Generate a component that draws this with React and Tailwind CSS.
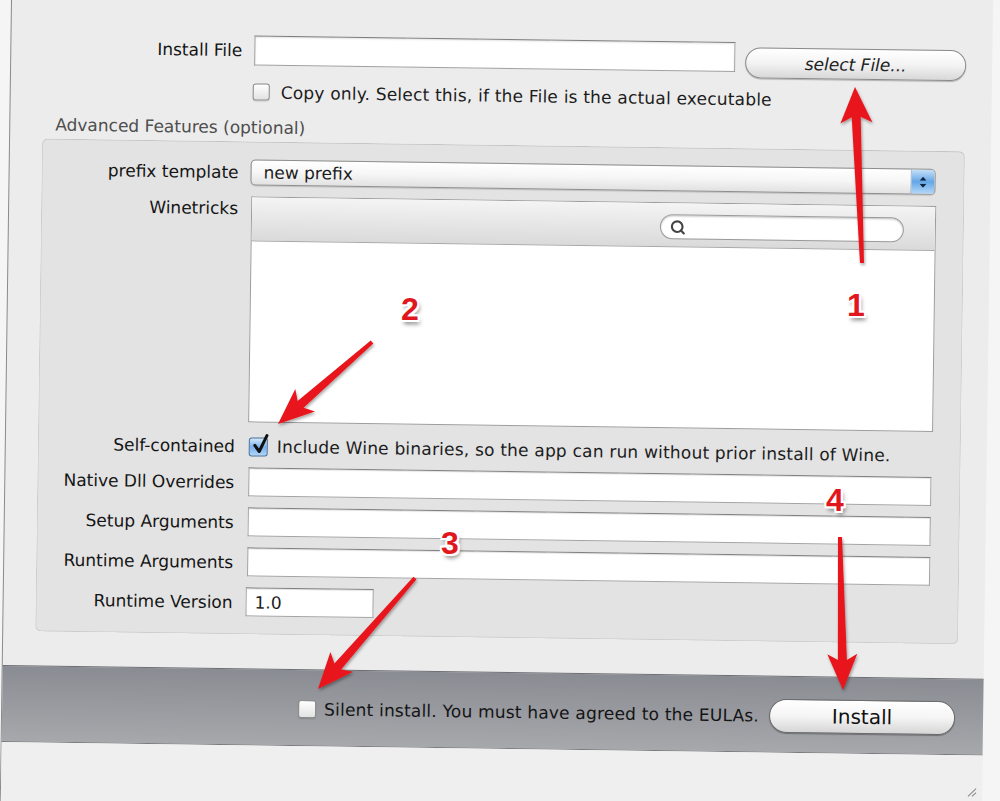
import React from "react";
import { Search } from "lucide-react";

// annotation arrows drawn over the screenshot (page coordinates)
function arrowPoints(tx, ty, px, py, headLen, headW, w0, w1) {
  const dx = px - tx;
  const dy = py - ty;
  const len = Math.hypot(dx, dy);
  const ux = dx / len;
  const uy = dy / len;
  const nx = -uy;
  const ny = ux;
  const bx = px - ux * headLen;
  const by = py - uy * headLen;
  const jx = bx + ux * 6;
  const jy = by + uy * 6;
  const pts = [
    [tx + (nx * w0) / 2, ty + (ny * w0) / 2],
    [jx + (nx * w1) / 2, jy + (ny * w1) / 2],
    [bx + (nx * headW) / 2, by + (ny * headW) / 2],
    [px, py],
    [bx - (nx * headW) / 2, by - (ny * headW) / 2],
    [jx - (nx * w1) / 2, jy - (ny * w1) / 2],
    [tx - (nx * w0) / 2, ty - (ny * w0) / 2],
  ];
  return pts.map((p) => p.map((v) => v.toFixed(1)).join(",")).join(" ");
}

const ARROWS = [
  [862, 263, 855, 87, 36, 32, 4, 9],
  [372, 342, 278, 424, 36, 30, 4, 9],
  [415, 578, 318, 689, 36, 30, 4, 9],
  [840, 537, 843, 690, 36, 30, 4, 9],
];

const outline =
  "[text-shadow:-2px_-2px_0_#fff,2px_-2px_0_#fff,-2px_2px_0_#fff,2px_2px_0_#fff,0_-2px_0_#fff,0_2px_0_#fff,-2px_0_0_#fff,2px_0_0_#fff,2px_4px_4px_rgba(0,0,0,0.5)]";

function Box({ className = "" }) {
  return (
    <div
      className={
        "h-[17px] w-[17px] shrink-0 rounded-[3px] border border-[#8c8c8c] bg-linear-to-b from-white to-[#e2e2e2] shadow-[0_1px_1px_rgba(0,0,0,0.15)] " +
        className
      }
    />
  );
}

function Field({ className = "", children }) {
  return (
    <div
      className={
        "flex h-[29px] items-center border border-[#a4a4a4] border-t-[#7f7f7f] bg-white pl-[8px] text-[17px] shadow-[inset_0_1px_1px_rgba(0,0,0,0.12)] " +
        className
      }
    >
      {children}
    </div>
  );
}

function Label({ children, className = "" }) {
  return (
    <div className={"w-[196px] shrink-0 whitespace-nowrap text-right text-[17px] text-[#151515] " + className}>
      {children}
    </div>
  );
}

export default function App() {
  return (
    <div className="relative h-[801px] w-[1000px] overflow-hidden bg-[#f5f5f5] font-['DejaVu_Sans',sans-serif] text-[17px] leading-[20px] text-[#1c1c1c]">
      <div className="pl-[12px]">
        <div className="-mt-[30px] flex h-[880px] w-[981px] origin-[0px_30px] rotate-[0.8deg] flex-col bg-[#ececec] pt-[30px] shadow-[-1px_0_0_#8a8a8a]">
          {/* install file */}
          <div className="flex items-start pt-[32px]">
            <div className="flex h-[30px] w-[231px] items-center justify-end text-[17px] text-[#151515]">
              Install File
            </div>
            <div className="ml-[12px] h-[30px] w-[481px] border border-[#a0a0a0] border-t-[#7c7c7c] bg-white shadow-[inset_0_1px_2px_rgba(0,0,0,0.12)]" />
            <button
              type="button"
              className="ml-[10px] mt-[5px] h-[31px] w-[221px] rounded-full border border-[#8a8a8a] bg-linear-to-b from-white via-[#f3f3f3] to-[#d8d8d8] text-[17px] italic text-[#222] shadow-[0_1px_1px_rgba(0,0,0,0.25)]"
            >
              select File...
            </button>
          </div>
          <div className="mt-[12px] flex h-[17px] items-center pl-[242px]">
            <Box />
            <span className="ml-[11px] whitespace-nowrap tracking-[0.2px]">
              Copy only. Select this, if the File is the actual executable
            </span>
          </div>

          <div className="ml-[45px] mt-[18px] h-[18px] whitespace-nowrap text-[17px] leading-[18px] text-[#4e4e4e]">
            Advanced Features (optional)
          </div>

          {/* advanced group */}
          <div className="ml-[32px] mt-[5px] h-[493px] w-[923px] rounded-[6px] border border-[#cdcdcd] border-t-[#c4c4c4] bg-[#e3e3e3] pt-[17px]">
            <div className="flex items-center">
              <Label>prefix template</Label>
              <div className="ml-[12px] flex h-[26px] w-[685px] items-center rounded-[5px] border border-[#8e8e8e] bg-linear-to-b from-white via-[#f6f6f6] to-[#e2e2e2] shadow-[0_1px_1px_rgba(0,0,0,0.15)]">
                <span className="flex-1 pl-[12px] text-[17px]">new prefix</span>
                <div className="flex h-full w-[24px] flex-col items-center justify-center gap-[3px] rounded-r-[4px] border-l border-[#6a8db3] bg-linear-to-b from-[#c6e0f8] via-[#64a6e6] to-[#b4d8f8]">
                  <svg width="7" height="4" viewBox="0 0 7 4">
                    <path d="M3.5 0 L7 4 L0 4 Z" fill="#10243e" />
                  </svg>
                  <svg width="7" height="4" viewBox="0 0 7 4">
                    <path d="M0 0 L7 0 L3.5 4 Z" fill="#10243e" />
                  </svg>
                </div>
              </div>
            </div>

            <div className="mt-[11px] flex items-start">
              <Label className="pt-[2px]">Winetricks</Label>
              <div className="ml-[13px] flex h-[226px] w-[685px] flex-col border border-[#9c9c9c] bg-white">
                <div className="flex h-[44px] items-start border-b border-[#a8a8a8] bg-linear-to-b from-[#f4f4f4] to-[#dadada] pl-[408px] pt-[11px]">
                  <div className="flex h-[25px] w-[244px] items-center rounded-full border border-[#9a9a9a] bg-white pl-[9px] shadow-[inset_0_1px_2px_rgba(0,0,0,0.25)]">
                    <Search size={16} strokeWidth={3.2} color="#444" />
                  </div>
                </div>
              </div>
            </div>

            <div className="mt-[14px] flex h-[20px] items-center">
              <Label>Self-contained</Label>
              <div className="relative ml-[14px] h-[19px] w-[19px] shrink-0 rounded-[3px] border border-[#44719f] bg-linear-to-b from-[#d6e9fb] via-[#78b0ea] to-[#b0d5f8]">
                <svg
                  className="absolute -top-[6px] left-[1px]"
                  width="20"
                  height="24"
                  viewBox="0 0 20 24"
                >
                  <path
                    d="M4 13 L8.5 19 L16 3"
                    stroke="#111"
                    strokeWidth="3"
                    fill="none"
                    strokeLinecap="round"
                    strokeLinejoin="round"
                  />
                </svg>
              </div>
              <span className="ml-[9px] whitespace-nowrap tracking-[0.2px]">
                Include Wine binaries, so the app can run without prior install of Wine.
              </span>
            </div>

            <div className="mt-[11px] flex items-center">
              <Label>Native Dll Overrides</Label>
              <Field className="ml-[14px] w-[683px]" />
            </div>
            <div className="mt-[11px] flex items-center">
              <Label>Setup Arguments</Label>
              <Field className="ml-[14px] w-[683px]" />
            </div>
            <div className="mt-[11px] flex items-center">
              <Label>Runtime Arguments</Label>
              <Field className="ml-[14px] w-[683px]" />
            </div>
            <div className="mt-[11px] flex items-center">
              <Label>Runtime Version</Label>
              <Field className="ml-[13px] w-[128px]">1.0</Field>
            </div>
          </div>

          {/* bottom bar */}
          <div className="mt-[34px] flex h-[77px] items-center border-t border-b border-t-[#6c6e73] border-b-[#7a7b7f] bg-linear-to-b from-[#898c92] to-[#a7a8ac] pl-[296px] pr-[28px] pt-[3px]">
            <Box className="h-[18px] w-[18px]" />
            <span className="ml-[8px] whitespace-nowrap text-[17px] tracking-[0.2px] text-[#141414]">
              Silent install. You must have agreed to the EULAs.
            </span>
            <button
              type="button"
              className="ml-auto h-[34px] w-[186px] shrink-0 rounded-full border border-[#6b6b6b] bg-linear-to-b from-white via-[#f5f5f5] to-[#d6d6d6] text-[20px] text-[#111] shadow-[0_1px_1px_rgba(0,0,0,0.3)]"
            >
              Install
            </button>
          </div>

          <div className="flex flex-1 items-start justify-end bg-[#efefef] pr-[5px] pt-[30px]">
            <svg width="12" height="12" viewBox="0 0 12 12">
              <path d="M11 3 L3 11 M11 7 L7 11" stroke="#8a8a8a" strokeWidth="1" />
            </svg>
          </div>
        </div>
      </div>

      {/* annotations */}
      <svg
        className="pointer-events-none absolute inset-0"
        width="1000"
        height="801"
        viewBox="0 0 1000 801"
      >
        <defs>
          <filter id="sh" x="-20%" y="-20%" width="140%" height="140%">
            <feDropShadow dx="1" dy="2" stdDeviation="1.5" floodColor="#000" floodOpacity="0.35" />
          </filter>
        </defs>
        {ARROWS.map((a, i) => (
          <polygon key={i} points={arrowPoints(...a)} fill="#e8161b" filter="url(#sh)" />
        ))}
      </svg>
      <div className={"pointer-events-none absolute left-[847px] top-[287px] font-['Liberation_Sans',sans-serif] text-[32px] font-bold leading-[36px] text-[#e0181d] " + outline}>
        1
      </div>
      <div className={"pointer-events-none absolute left-[401px] top-[291px] font-['Liberation_Sans',sans-serif] text-[32px] font-bold leading-[36px] text-[#e0181d] " + outline}>
        2
      </div>
      <div className={"pointer-events-none absolute left-[441px] top-[525px] font-['Liberation_Sans',sans-serif] text-[32px] font-bold leading-[36px] text-[#e0181d] " + outline}>
        3
      </div>
      <div className={"pointer-events-none absolute left-[826px] top-[482px] font-['Liberation_Sans',sans-serif] text-[32px] font-bold leading-[36px] text-[#e0181d] " + outline}>
        4
      </div>
    </div>
  );
}
